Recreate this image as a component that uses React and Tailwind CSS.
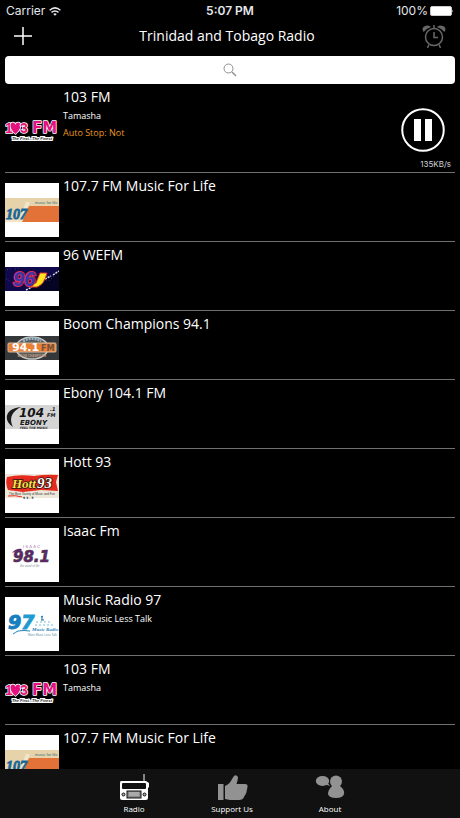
import { useState } from "react";

function Logo103() {
  return (
    <svg viewBox="0 0 54 54" className="size-[54px]" aria-hidden="true">
      <g fontWeight="bold" stroke="#ffffff" strokeWidth="1.5" strokeLinejoin="round" paintOrder="stroke" fill="#e5127d">
        <text x="0" y="29" fontFamily="Liberation Sans" fontSize="14">1</text>
        <path d="M10.5 30C7 27 5.500 24 5.500 21.500c0-4 4.500-4 5-.5.500-3.500 5-3.500 5 .5 0 2.500-1.500 5.500-5 8.500z" />
        <text x="15" y="29" fontFamily="Liberation Sans" fontSize="14">3</text>
        <text x="27" y="29" fontFamily="DejaVu Sans" fontSize="15">FM</text>
      </g>
      <text x="27" y="36" textAnchor="middle" fontFamily="Liberation Sans" fontStyle="italic" fontWeight="bold" fontSize="4" fill="#222" stroke="#fff" strokeWidth="2" paintOrder="stroke">The First...The Finest</text>
    </svg>
  );
}

function Logo107() {
  return (
    <svg viewBox="0 0 54 54" className="size-[54px] bg-white" aria-hidden="true">
      <rect y="15" width="54" height="24" fill="#e6d3aa" />
      <path d="M24 23H54V39H17z" fill="#e27238" />
      <path d="M21 19h4l-8 20H0v-2h14z" fill="#f1e5cc" />
      <text x="1" y="36" fontFamily="Liberation Sans Narrow" fontWeight="bold" fontStyle="italic" fontSize="14" fill="#17669a" stroke="#17669a" strokeWidth=".8">107</text>
      <text x="30" y="21" fontFamily="Liberation Sans" fontSize="4" fill="#336f88">music for life</text>
    </svg>
  );
}

function Logo96() {
  return (
    <svg viewBox="0 0 54 54" className="size-[54px] bg-white" aria-hidden="true">
      <rect y="15" width="54" height="24" fill="#10094c" />
      <path d="M24 38l7-7 6-1 5-4 5-1 7-6v20H24z" fill="#050523" />
      <path d="M2 18l4-2M1 27l5 3M10 17l4-1M36 32l6-4M44 29l5-5" stroke="#39377c" strokeDasharray="1 2" />
      <path d="M21 38l6-3M40 27l6-3M48 23l6-4" stroke="#ddd" strokeDasharray="2 1" strokeWidth="1.5" />
      <path d="M24 31h7l4-10h7q-3 12-10 14h-8z" fill="#ffe51e" stroke="#df3430" />
      <text x="8" y="34" fontSize="20" fontFamily="Liberation Sans" fontStyle="italic" fontWeight="bold" fill="#3935ad" stroke="#e12c50" strokeWidth="2" paintOrder="stroke">96</text>
    </svg>
  );
}

function Logo94() {
  return (
    <svg viewBox="0 0 54 54" className="size-[54px] bg-white" aria-hidden="true">
      <rect y="15" width="54" height="24" fill="#34383b" />
      <ellipse cx="27" cy="27" rx="16" ry="11" fill="#595b5b" stroke="#c7c7c1" strokeWidth="1.5" />
      <path d="M18 20q9-5 18 0" fill="none" stroke="#99b7c9" strokeWidth="3" strokeDasharray="2 1" />
      <rect x="3" y="22" width="48" height="9" rx="1" fill="#e98037" stroke="#d4ba9f" />
      <text x="7" y="30" fontFamily="DejaVu Sans" fontWeight="bold" fontSize="11" fill="#fff">94.1</text>
      <text x="36" y="30" fontFamily="DejaVu Sans" fontWeight="bold" fontSize="8" fill="#74513d">FM</text>
      <text x="27" y="36" textAnchor="middle" fontFamily="Liberation Sans" fontWeight="bold" fontSize="3" fill="#c29b7e">BOOM CHAMPIONS</text>
    </svg>
  );
}

function Logo104() {
  return (
    <svg viewBox="0 0 54 54" className="size-[54px] bg-white" aria-hidden="true">
      <rect y="15" width="54" height="24" fill="#d5d5d5" />
      <path d="M16 17C1 18-3 30 8 37 4 29 6 22 16 17z" fill="#1b1b1b" />
      <g fontFamily="DejaVu Sans" fontWeight="bold" fontStyle="italic" fill="#161616">
        <text x="14" y="27" fontSize="12">104</text>
        <text x="42" y="27" fontSize="5">FM</text>
        <text x="45" y="21" fontSize="5">.1</text>
        <text x="15" y="35" fontSize="7">EBONY</text>
        <text x="15" y="39" fontSize="3">FEEL THE MUSIC</text>
      </g>
    </svg>
  );
}

function LogoHott() {
  return (
    <svg viewBox="0 0 54 54" className="size-[54px] bg-white" aria-hidden="true">
      <rect y="15" width="54" height="24" fill="#eee8db" />
      <path d="M2 18q12-3 27-1 12-2 24-1l-2 7 2 9-17-1-18 2-15-2q-3-7-1-13z" fill="#e52b20" />
      <g fontFamily="Liberation Serif" fontWeight="bold" fontStyle="italic" stroke="#29180d" strokeWidth="1.5" paintOrder="stroke">
        <text x="7" y="29" fontSize="13" fill="#ffe34b">Hott</text>
        <text x="32" y="29" fontSize="15" fill="#fff">93</text>
      </g>
      <path d="M3 37q8-1 14 1" fill="none" stroke="#e52b20" />
      <text x="27" y="36" textAnchor="middle" fontFamily="Liberation Sans" fontSize="3" fill="#333">The Best Variety of Music and Fun</text>
      <text x="18" y="40" fontFamily="DejaVu Sans" fontWeight="bold" fontSize="3" fill="#222">9 3 . 5</text>
    </svg>
  );
}

function LogoIsaac() {
  return (
    <svg viewBox="0 0 54 54" className="size-[54px] bg-white" aria-hidden="true">
      <text x="18" y="20" fontFamily="DejaVu Sans" fontSize="4" fill="#a06fa8">I S A A C</text>
      <path d="M7 25q4-5 10-4l-2 2q-5 0-8 2z" fill="#65216f" />
      <text x="8" y="34" fontSize="15" fontFamily="DejaVu Sans" fontWeight="bold" fontStyle="italic" fill="#65216f" stroke="#48404c" strokeWidth=".7">98.1</text>
      <text x="15" y="39" fontFamily="Liberation Sans" fontSize="3" fontStyle="italic" fill="#7c9490">the word of life</text>
    </svg>
  );
}

function Logo97() {
  return (
    <svg viewBox="0 0 54 54" className="size-[54px] bg-white" aria-hidden="true">
      <text x="3" y="32" fontFamily="DejaVu Sans" fontStyle="italic" fontWeight="bold" fontSize="19" fill="#157fc0" stroke="#157fc0">
        9<tspan fill="#1f9bd2" stroke="#1f9bd2">7</tspan>
      </text>
      <path d="M31 25h15M30 28h20" stroke="#78bede" strokeDasharray="2 2" />
      <path d="M37 19v4M36 20l2-1M36 23h3" stroke="#176ca5" fill="none" />
      <path d="M8 37q3-2 5-3 6-1 12 0" fill="none" stroke="#2682b8" />
      <text x="27" y="34" fontFamily="Liberation Serif" fontStyle="italic" fontWeight="bold" fontSize="5" fill="#2682b8">Music Radio</text>
      <text x="23" y="39" fontFamily="Liberation Sans" fontSize="3" fill="#5f94ac">More Music Less Talk</text>
    </svg>
  );
}

const stations = [
  { id: 1, name: "103 FM", note: "Tamasha", Logo: Logo103, playing: true },
  { id: 2, name: "107.7 FM Music For Life", Logo: Logo107 },
  { id: 3, name: "96 WEFM", Logo: Logo96 },
  { id: 4, name: "Boom Champions 94.1", Logo: Logo94 },
  { id: 5, name: "Ebony 104.1 FM", Logo: Logo104 },
  { id: 6, name: "Hott 93", Logo: LogoHott },
  { id: 7, name: "Isaac Fm", Logo: LogoIsaac },
  { id: 8, name: "Music Radio 97", note: "More Music Less Talk", Logo: Logo97 },
  { id: 9, name: "103 FM", note: "Tamasha", Logo: Logo103 },
  { id: 10, name: "107.7 FM Music For Life", Logo: Logo107 },
];

function StatusBar() {
  return (
    <div className="grid h-[22px] shrink-0 grid-cols-3 items-center px-1.5 font-['Inter',sans-serif] text-xs text-gray-200">
      <div className="flex items-center gap-1">
        <span>Carrier</span>
        <svg viewBox="0 0 12 9" className="h-[9px] w-3" fill="none" stroke="currentColor" strokeWidth="1.5">
          <path d="M.6 3.2q5.4-4.6 10.8 0M2.5 5.3q3.5-2.8 7 0" />
          <path d="M6 8.7L4.2 7q1.8-1.4 3.6 0z" fill="currentColor" stroke="none" />
        </svg>
      </div>
      <span className="text-center font-semibold">5:07 PM</span>
      <div className="flex items-center justify-end gap-0.5">
        <span>100%</span>
        <svg viewBox="0 0 24 10" className="h-2.5 w-6">
          <rect x=".5" y=".5" width="21" height="9" rx="1.5" fill="#fff" stroke="#ccc" />
          <path d="M22.5 3.5q1.5 1.5 0 3z" fill="#fff" />
        </svg>
      </div>
    </div>
  );
}

function Header() {
  return (
    <header className="flex h-[34px] shrink-0 items-center justify-between px-3.5 pb-1.5">
      <button aria-label="Add station">
        <svg viewBox="0 0 18 18" className="size-[18px]" stroke="#fff" strokeWidth="1.5">
          <path d="M9 0v18M0 9h18" />
        </svg>
      </button>
      <h1 className="text-sm">Trinidad and Tobago Radio</h1>
      <button aria-label="Alarm">
        <svg viewBox="0 0 24 24" className="size-6" fill="none" stroke="#686868">
          <circle cx="12" cy="13" r="8.5" strokeWidth="1.5" />
          <path d="M12 8v5.500h4M7 20.500L5.500 24M17 20.500l1.500 3.500M12 1v3" strokeWidth="1.500" />
          <path d="M1.500 8Q-1 3.500 3 2q4-1.500 6 1Q4.500 4.500 1.500 8zM22.500 8Q25 3.500 21 2q-4-1.500-6 1 4.500 1.500 7.500 5z" fill="#686868" stroke="none" />
        </svg>
      </button>
    </header>
  );
}

function StationRow({ station, paused, onToggle }) {
  const { name, note, Logo, playing } = station;
  return (
    <li className={playing ? "flex h-[89px] gap-1 border-b border-[#707070]" : "flex h-[69px] gap-1 border-b border-[#707070]"}>
      <div className={playing ? "shrink-0 pt-5" : "shrink-0 pt-2.5"}>
        <Logo />
      </div>
      <div className="min-w-0 flex-1 pt-[3px]">
        <h2 className="text-sm leading-5">{name}</h2>
        {note && <p className="pt-px text-[9px] leading-4">{note}</p>}
        {playing && <p className="pt-px text-[9px] leading-4 text-[#e99721]">Auto Stop: Not</p>}
      </div>
      {playing && (
        <div className="flex flex-col items-end gap-1.5 pt-6 pr-1">
          <button aria-label={paused ? "Play" : "Pause"} onClick={onToggle} className="mr-1.5">
            <svg viewBox="0 0 44 44" className="size-11" fill="#fff">
              <circle cx="22" cy="22" r="20.75" fill="none" stroke="#fff" strokeWidth="2" />
              {paused ? <path d="M16 11v22l18-11z" /> : <path d="M13 11h7v22h-7zM24 11h7v22h-7z" />}
            </svg>
          </button>
          <span className="font-['Inter',sans-serif] text-[8px] leading-3 text-gray-300">135KB/s</span>
        </div>
      )}
    </li>
  );
}

function TabBar() {
  return (
    <nav className="flex h-[49px] shrink-0 justify-center bg-[#111111] pl-1 text-[8px] leading-3">
      <button className="flex w-[98px] flex-col items-center gap-0.5 pt-1">
        <svg viewBox="0 0 32 28" className="h-7 w-8">
          <path d="M26 8V1" stroke="#aaa" strokeWidth="1.5" />
          <path d="M3 8h25l3 2v4l-1 1v10q0 2-2 2H4q-2 0-2-2V10q0-2 1-2z" fill="#fff" />
          <rect x="4" y="10" width="24" height="6" rx="1" fill="#111" />
          <rect x="9" y="18" width="14" height="7" fill="#888" stroke="#111" />
          <path d="M11 20h10M11 22h10" stroke="#ccc" />
          <circle cx="5.5" cy="21.5" r="1.5" fill="#aaa" stroke="#111" />
          <circle cx="26.5" cy="21.5" r="1.5" fill="#aaa" stroke="#111" />
        </svg>
        Radio
      </button>
      <button className="flex w-[98px] flex-col items-center gap-0.5 pt-1">
        <svg viewBox="0 0 32 28" className="h-7 w-8" fill="#929292">
          <rect x="2" y="11" width="5.5" height="16" />
          <path d="M9 13q5-2 7-7l2-3q2-2 4 1 0 3-1.500 7H29q3 0 2.500 3-.5 6-3.500 10-1 3-5 3H14l-5-1z" />
        </svg>
        Support Us
      </button>
      <button className="flex w-[98px] flex-col items-center gap-0.5 pt-1">
        <svg viewBox="0 0 32 28" className="h-7 w-8" fill="#929292">
          <ellipse cx="8.500" cy="8" rx="6.700" ry="5" />
          <path d="M10 11l6 2-3-4z" />
          <circle cx="22" cy="8.500" r="6" />
          <path d="M18 13h8q5 4 4 8-1 4-8 4t-8-4q0-4 4-8z" />
        </svg>
        About
      </button>
    </nav>
  );
}

export default function App() {
  const [paused, setPaused] = useState(false);

  return (
    <div className="flex h-screen flex-col overflow-hidden bg-black font-['Open_Sans',sans-serif] text-white">
      <StatusBar />
      <Header />
      <main className="flex min-h-0 flex-1 flex-col px-[5px]">
        {/* Search */}
        <label className="grid shrink-0 items-center rounded-sm bg-white">
          <input type="search" aria-label="Search stations" className="col-start-1 row-start-1 h-7 w-full bg-transparent px-3 text-sm text-black outline-none" />
          <svg viewBox="0 0 14 14" className="pointer-events-none col-start-1 row-start-1 size-3.5 justify-self-center" fill="none" stroke="#8e8e93">
            <circle cx="5.5" cy="5.5" r="4.5" />
            <path d="M9 9l4 4" strokeWidth="1.5" />
          </svg>
        </label>

        {/* Station list */}
        <ul className="min-h-0 flex-1 overflow-hidden">
          {stations.map((station) => (
            <StationRow key={station.id} station={station} paused={paused} onToggle={() => setPaused(!paused)} />
          ))}
        </ul>
      </main>
      <TabBar />
    </div>
  );
}
